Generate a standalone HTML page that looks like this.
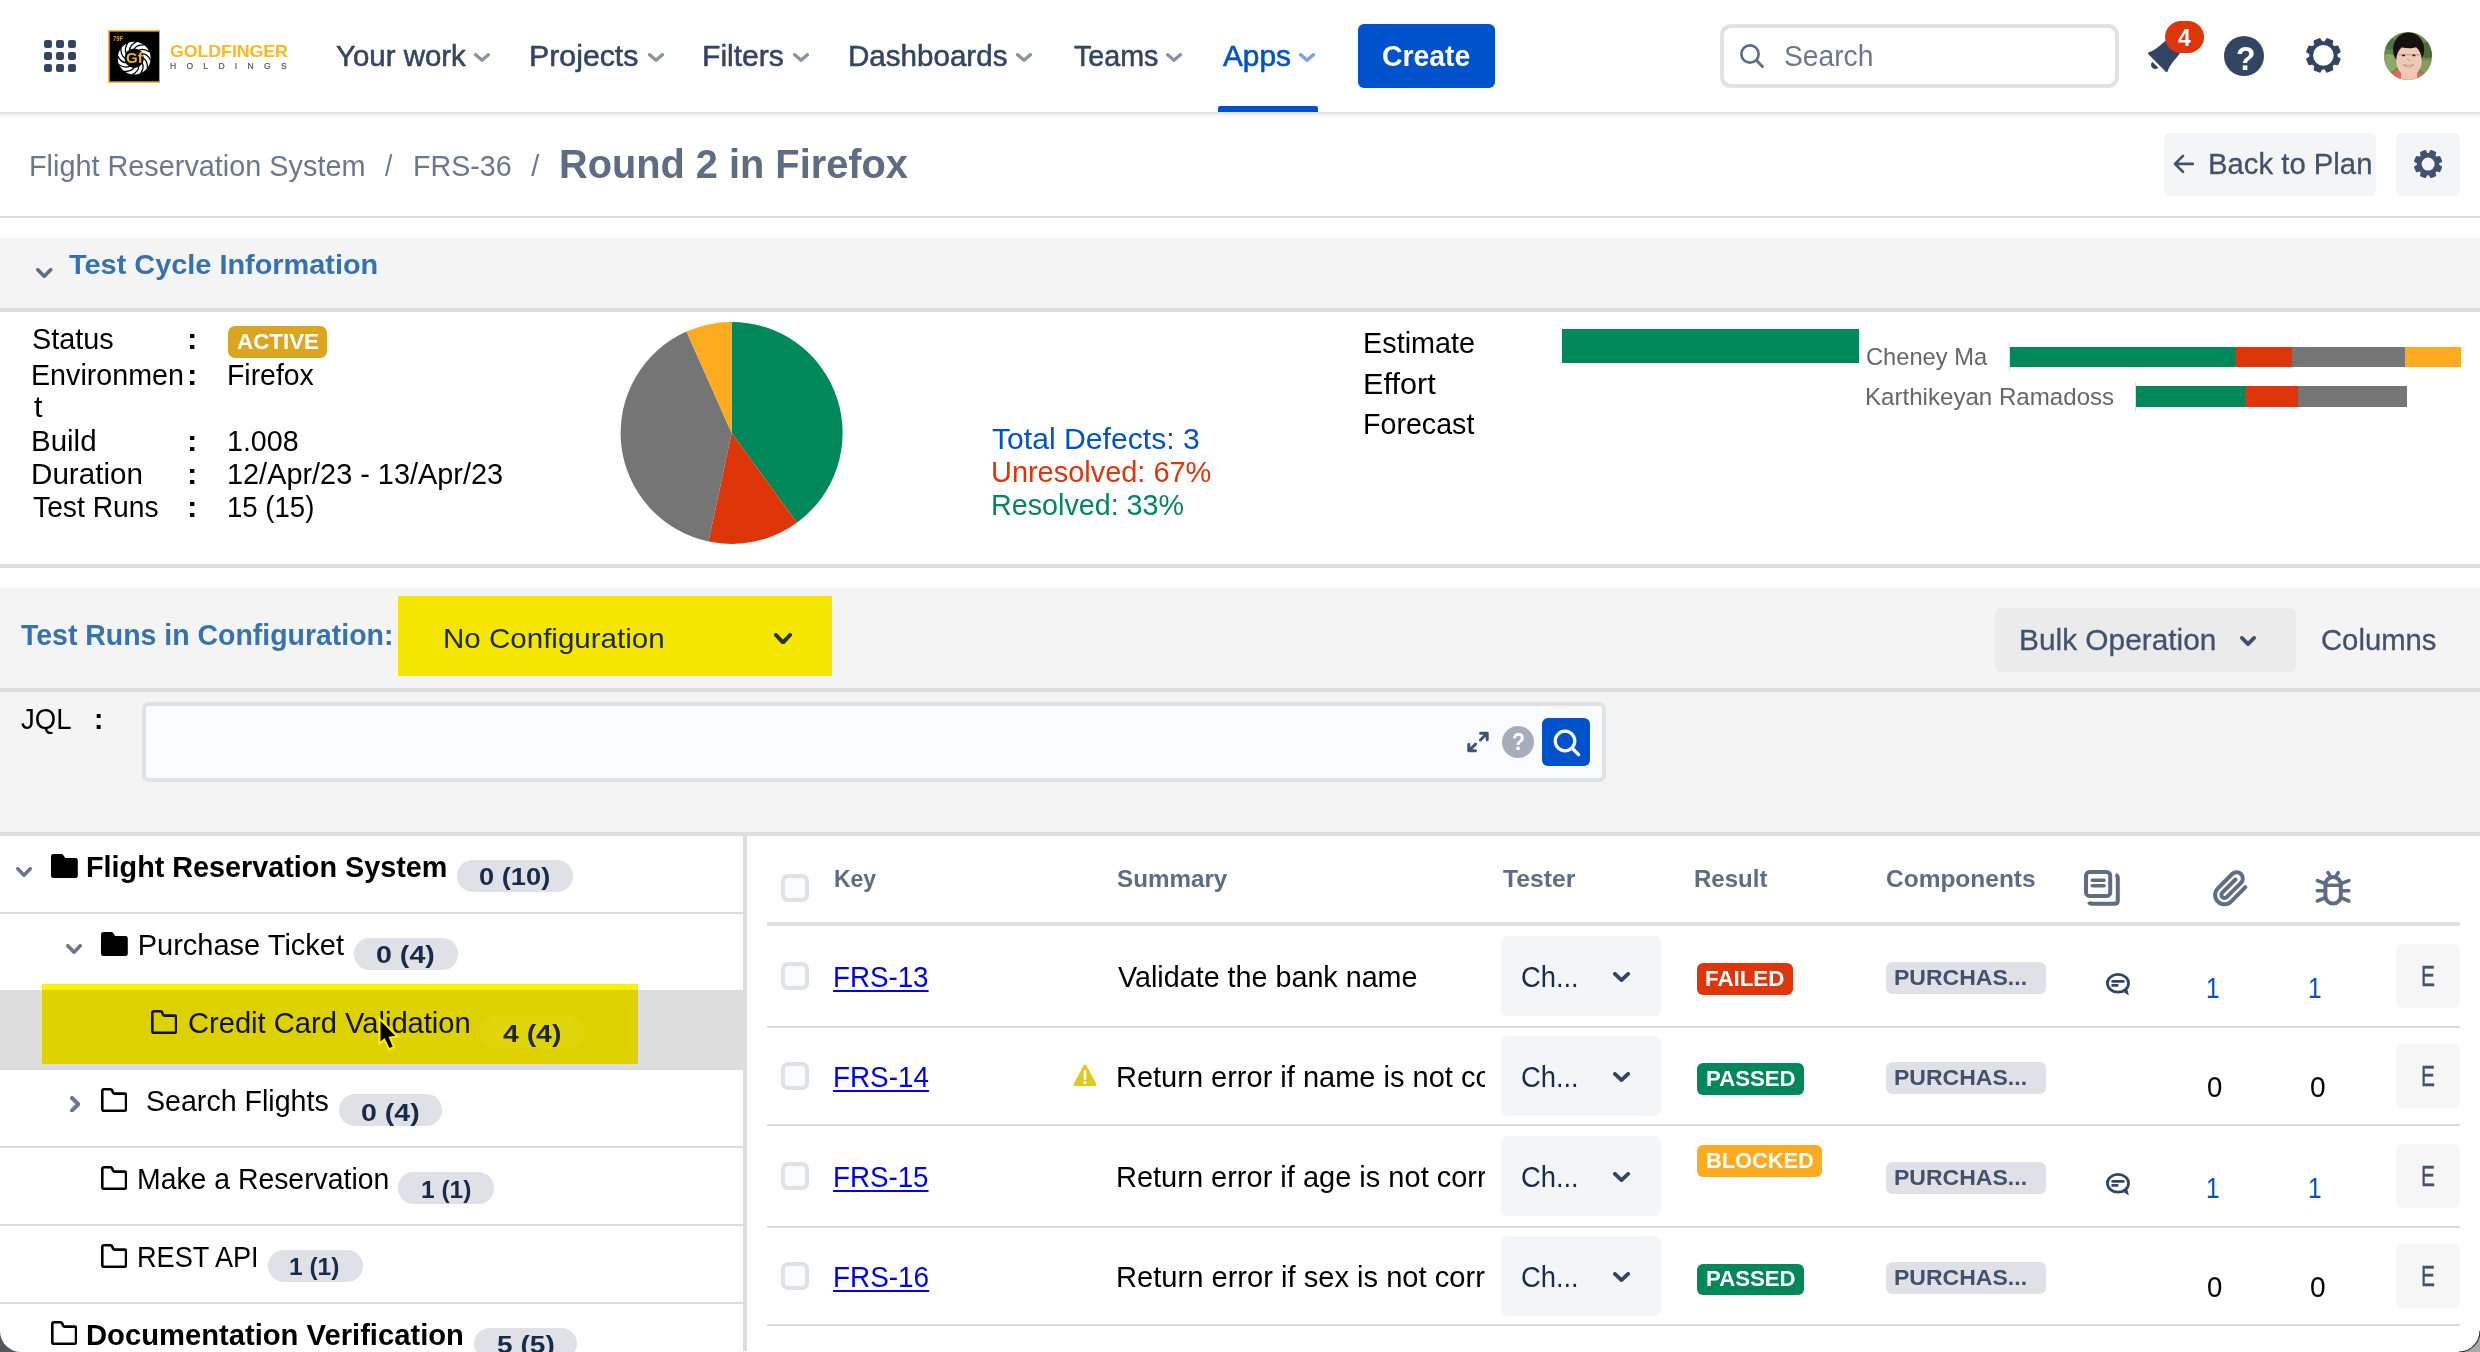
<!DOCTYPE html>
<html lang="en"><head><meta charset="utf-8"><title>Round 2 in Firefox - Test Cycle</title>
<style>
html,body{margin:0;padding:0;background:#fff;}
body{width:2480px;height:1352px;position:relative;overflow:hidden;font-family:"Liberation Sans",sans-serif;}
#root{position:absolute;left:0;top:0;width:2480px;height:1352px;will-change:transform;}
.g{position:absolute;left:0;top:0;margin:0;padding:0;}
.a{position:absolute;display:block;}
.t{position:absolute;display:block;white-space:pre;line-height:1;transform-origin:0 0;}
a.t{text-decoration:none;}
</style></head><body><div id="root">
<section class="g" aria-label="Page chrome">
<div class="a" style="left:0;top:112px;width:2480px;height:7px;background:linear-gradient(to bottom,rgba(9,30,66,.16),rgba(9,30,66,.06) 35%,rgba(9,30,66,0))"></div>
<div class="a" style="left:1218.00px;top:106.00px;width:100.00px;height:6.00px;background:#0052cc;border-radius:2px 2px 0 0;"></div>
<div class="a" style="left:0.00px;top:216.00px;width:2480.00px;height:2.00px;background:#dcdcdc;"></div>
<div class="a" style="left:0.00px;top:238.00px;width:2480.00px;height:70.00px;background:#f4f4f4;"></div>
<div class="a" style="left:0.00px;top:308.00px;width:2480.00px;height:4.00px;background:#dddddd;"></div>
<div class="a" style="left:0.00px;top:564.00px;width:2480.00px;height:4.00px;background:#dddddd;"></div>
<div class="a" style="left:0.00px;top:588.00px;width:2480.00px;height:244.00px;background:#f4f4f4;"></div>
<div class="a" style="left:0.00px;top:688.00px;width:2480.00px;height:4.00px;background:#dddddd;"></div>
<div class="a" style="left:0.00px;top:832.00px;width:2480.00px;height:4.00px;background:#dddddd;"></div>
<div class="a" style="left:743.00px;top:836.00px;width:4.00px;height:514.70px;background:#dddddd;"></div>
</section>
<section class="g" aria-label="Top navigation">
<span class="t" style="left:335.50px;top:42.00px;font-size:29.00px;color:#344563;transform:scaleX(1.0150);-webkit-text-stroke:0.55px #344563;">Your work</span>
<span class="t" style="left:529.43px;top:42.00px;font-size:29.00px;color:#344563;transform:scaleX(1.0447);-webkit-text-stroke:0.55px #344563;">Projects</span>
<span class="t" style="left:702.25px;top:42.00px;font-size:29.00px;color:#344563;transform:scaleX(1.0375);-webkit-text-stroke:0.55px #344563;">Filters</span>
<span class="t" style="left:848.47px;top:42.00px;font-size:29.00px;color:#344563;transform:scaleX(1.0197);-webkit-text-stroke:0.55px #344563;">Dashboards</span>
<span class="t" style="left:1073.50px;top:42.00px;font-size:29.00px;color:#344563;transform:scaleX(0.9882);-webkit-text-stroke:0.55px #344563;">Teams</span>
<span class="t" style="left:1223.08px;top:42.00px;font-size:29.00px;color:#0052cc;transform:scaleX(1.0265);-webkit-text-stroke:0.55px #0052cc;">Apps</span>
<svg class="a" style="left:474.00px;top:52.50px" width="16.00" height="9.00" viewBox="0 0 16.00 9.00"><path d="M1.70 1.70L8.00 7.30L14.30 1.70" fill="none" stroke="#8993a4" stroke-width="3.4" stroke-linecap="round" stroke-linejoin="round"/></svg>
<svg class="a" style="left:647.50px;top:52.50px" width="16.00" height="9.00" viewBox="0 0 16.00 9.00"><path d="M1.70 1.70L8.00 7.30L14.30 1.70" fill="none" stroke="#8993a4" stroke-width="3.4" stroke-linecap="round" stroke-linejoin="round"/></svg>
<svg class="a" style="left:793.00px;top:52.50px" width="16.00" height="9.00" viewBox="0 0 16.00 9.00"><path d="M1.70 1.70L8.00 7.30L14.30 1.70" fill="none" stroke="#8993a4" stroke-width="3.4" stroke-linecap="round" stroke-linejoin="round"/></svg>
<svg class="a" style="left:1016.00px;top:52.50px" width="16.00" height="9.00" viewBox="0 0 16.00 9.00"><path d="M1.70 1.70L8.00 7.30L14.30 1.70" fill="none" stroke="#8993a4" stroke-width="3.4" stroke-linecap="round" stroke-linejoin="round"/></svg>
<svg class="a" style="left:1166.00px;top:52.50px" width="16.00" height="9.00" viewBox="0 0 16.00 9.00"><path d="M1.70 1.70L8.00 7.30L14.30 1.70" fill="none" stroke="#8993a4" stroke-width="3.4" stroke-linecap="round" stroke-linejoin="round"/></svg>
<svg class="a" style="left:1298.50px;top:52.50px" width="16.00" height="9.00" viewBox="0 0 16.00 9.00"><path d="M1.70 1.70L8.00 7.30L14.30 1.70" fill="none" stroke="#7da2e4" stroke-width="3.4" stroke-linecap="round" stroke-linejoin="round"/></svg>
<div class="a" style="left:1358.00px;top:24.00px;width:137.00px;height:63.50px;background:#0052cc;border-radius:6px;"></div>
<span class="t" style="left:1382.46px;top:42.00px;font-size:29.00px;color:#fff;font-weight:700;transform:scaleX(0.9789);">Create</span>
<div class="a" style="left:1720px;top:24px;width:391px;height:56px;border:4px solid #dfe1e6;border-radius:11px;background:#fff"></div>
<span class="t" style="left:1784.45px;top:42.00px;font-size:29.00px;color:#6b778c;transform:scaleX(0.9732);">Search</span>
</section>
<section class="g" aria-label="Breadcrumb">
<span class="t" style="left:29.47px;top:152.00px;font-size:29.00px;color:#6b778c;transform:scaleX(0.9941);">Flight Reservation System</span>
<span class="t" style="left:385.48px;top:152.00px;font-size:29.00px;color:#6b778c;transform:scaleX(0.9078);">/</span>
<span class="t" style="left:413.17px;top:152.00px;font-size:29.00px;color:#6b778c;transform:scaleX(0.9872);">FRS-36</span>
<span class="t" style="left:531.22px;top:152.00px;font-size:29.00px;color:#6b778c;">/</span>
<span class="t" style="left:559.08px;top:144.00px;font-size:40.50px;color:#5e6c84;font-weight:700;transform:scaleX(0.9814);">Round 2 in Firefox</span>
<div class="a" style="left:2164.00px;top:132.50px;width:212.00px;height:63.50px;background:#f4f5f7;border-radius:6px;"></div>
<span class="t" style="left:2208.44px;top:150.00px;font-size:29.00px;color:#42526e;transform:scaleX(1.0099);-webkit-text-stroke:0.3px #42526e;">Back to Plan</span>
<div class="a" style="left:2396.00px;top:132.50px;width:64.00px;height:63.50px;background:#f4f5f7;border-radius:6px;"></div>
</section>
<section class="g" aria-label="Test cycle information">
<svg class="a" style="left:36.00px;top:268.00px" width="16.50" height="10.00" viewBox="0 0 16.50 10.00"><path d="M1.80 1.80L8.25 8.20L14.70 1.80" fill="none" stroke="#5e6c84" stroke-width="3.6" stroke-linecap="round" stroke-linejoin="round"/></svg>
<span class="t" style="left:69.25px;top:251.00px;font-size:27.50px;color:#3572b0;font-weight:700;transform:scaleX(1.0505);">Test Cycle Information</span>
<span class="t" style="left:32.47px;top:325.00px;font-size:29.00px;color:#000;transform:scaleX(0.9944);">Status</span>
<span class="t" style="left:187.26px;top:325.00px;font-size:29.00px;color:#000;font-weight:700;transform:scaleX(1.0730);">:</span>
<span class="t" style="left:31.43px;top:361.00px;font-size:29.00px;color:#000;transform:scaleX(0.9884);">Environmen</span>
<span class="t" style="left:187.26px;top:361.00px;font-size:29.00px;color:#000;font-weight:700;transform:scaleX(1.0730);">:</span>
<span class="t" style="left:31.34px;top:427.00px;font-size:29.00px;color:#000;transform:scaleX(1.0165);">Build</span>
<span class="t" style="left:187.26px;top:427.00px;font-size:29.00px;color:#000;font-weight:700;transform:scaleX(1.0730);">:</span>
<span class="t" style="left:31.41px;top:460.00px;font-size:29.00px;color:#000;transform:scaleX(1.0214);">Duration</span>
<span class="t" style="left:187.26px;top:460.00px;font-size:29.00px;color:#000;font-weight:700;transform:scaleX(1.0730);">:</span>
<span class="t" style="left:32.85px;top:493.00px;font-size:29.00px;color:#000;transform:scaleX(0.9746);">Test Runs</span>
<span class="t" style="left:187.26px;top:493.00px;font-size:29.00px;color:#000;font-weight:700;transform:scaleX(1.0730);">:</span>
<span class="t" style="left:33.53px;top:393.00px;font-size:29.00px;color:#000;transform:scaleX(1.05);">t</span>
<div class="a" style="left:228.00px;top:326.00px;width:98.75px;height:31.75px;background:#daa520;border-radius:7px;"></div>
<span class="t" style="left:236.62px;top:331.00px;font-size:22.00px;color:#fff;font-weight:700;transform:scaleX(1.0162);">ACTIVE</span>
<span class="t" style="left:227.43px;top:361.00px;font-size:29.00px;color:#000;transform:scaleX(0.9791);">Firefox</span>
<span class="t" style="left:227.39px;top:427.00px;font-size:29.00px;color:#000;transform:scaleX(0.9859);">1.008</span>
<span class="t" style="left:227.47px;top:460.00px;font-size:29.00px;color:#000;transform:scaleX(0.9955);">12/Apr/23 - 13/Apr/23</span>
<span class="t" style="left:227.39px;top:493.00px;font-size:29.00px;color:#000;transform:scaleX(0.9505);">15 (15)</span>
<svg class="a" style="left:0;top:0" width="2480" height="600" viewBox="0 0 2480 600"><path d="M731.6 432.9L731.60 321.90A111.0 111.0 0 0 1 796.84 522.70Z" fill="#00875a"/><path d="M731.6 432.9L796.84 522.70A111.0 111.0 0 0 1 708.52 541.47Z" fill="#de350b"/><path d="M731.6 432.9L708.52 541.47A111.0 111.0 0 0 1 686.45 331.50Z" fill="#757575"/><path d="M731.6 432.9L686.45 331.50A111.0 111.0 0 0 1 731.60 321.90Z" fill="#ffab1f"/></svg>
<span class="t" style="left:992.22px;top:425.00px;font-size:29.00px;color:#0052cc;transform:scaleX(1.0393);">Total Defects: 3</span>
<span class="t" style="left:991.01px;top:458.00px;font-size:29.00px;color:#de350b;transform:scaleX(0.9976);">Unresolved: 67%</span>
<span class="t" style="left:990.88px;top:491.00px;font-size:29.00px;color:#00875a;transform:scaleX(0.9897);">Resolved: 33%</span>
<span class="t" style="left:1363.43px;top:329.00px;font-size:29.00px;color:#000;transform:scaleX(0.9936);">Estimate</span>
<span class="t" style="left:1363.41px;top:370.00px;font-size:29.00px;color:#000;transform:scaleX(1.0570);">Effort</span>
<span class="t" style="left:1363.46px;top:410.00px;font-size:29.00px;color:#000;transform:scaleX(0.9872);">Forecast</span>
<div class="a" style="left:1562.00px;top:328.75px;width:296.75px;height:34.25px;background:#00875a;"></div>
<span class="t" style="left:1865.90px;top:345.00px;font-size:24.50px;color:#666;transform:scaleX(0.9664);">Cheney Ma</span>
<span class="t" style="left:1864.91px;top:385.00px;font-size:24.50px;color:#666;transform:scaleX(0.9836);">Karthikeyan Ramadoss</span>
<div class="a" style="left:2009.30px;top:341.00px;width:1.00px;height:31.20px;background:#e0e0e0;"></div>
<div class="a" style="left:2010.00px;top:346.60px;width:226.00px;height:20.80px;background:#00875a;"></div>
<div class="a" style="left:2235.00px;top:346.60px;width:58.00px;height:20.80px;background:#de350b;"></div>
<div class="a" style="left:2292.00px;top:346.60px;width:113.00px;height:20.80px;background:#757575;"></div>
<div class="a" style="left:2404.50px;top:346.60px;width:56.50px;height:20.80px;background:#ffab1f;"></div>
<div class="a" style="left:2135.30px;top:381.60px;width:1.00px;height:30.70px;background:#e0e0e0;"></div>
<div class="a" style="left:2136.00px;top:386.20px;width:109.00px;height:20.80px;background:#00875a;"></div>
<div class="a" style="left:2244.50px;top:386.20px;width:54.50px;height:20.80px;background:#de350b;"></div>
<div class="a" style="left:2298.40px;top:386.20px;width:108.40px;height:20.80px;background:#757575;"></div>
</section>
<section class="g" aria-label="Test runs configuration">
<span class="t" style="left:21.25px;top:621.00px;font-size:29.00px;color:#3572b0;font-weight:700;transform:scaleX(0.9809);">Test Runs in Configuration:</span>
<div class="a" style="left:397.00px;top:595.00px;width:436.00px;height:81.50px;background:#f4f4fa;"></div>
<div class="a" style="left:398.00px;top:596.00px;width:434.00px;height:79.50px;background:#f4e600;"></div>
<span class="t" style="left:442.72px;top:625.00px;font-size:28.00px;color:#1b2a12;transform:scaleX(1.0549);">No Configuration</span>
<svg class="a" style="left:774.00px;top:632.50px" width="18.00" height="11.50" viewBox="0 0 18.00 11.50"><path d="M1.90 1.90L9.00 9.60L16.10 1.90" fill="none" stroke="#2a3413" stroke-width="3.8" stroke-linecap="round" stroke-linejoin="round"/></svg>
<div class="a" style="left:1995.00px;top:608.00px;width:301.00px;height:63.50px;background:#ebebeb;border-radius:7px;"></div>
<span class="t" style="left:2018.86px;top:626.00px;font-size:29.00px;color:#42526e;transform:scaleX(1.0289);-webkit-text-stroke:0.3px #42526e;">Bulk Operation</span>
<svg class="a" style="left:2240.00px;top:636.00px" width="16.00" height="10.00" viewBox="0 0 16.00 10.00"><path d="M1.90 1.90L8.00 8.10L14.10 1.90" fill="none" stroke="#42526e" stroke-width="3.8" stroke-linecap="round" stroke-linejoin="round"/></svg>
<span class="t" style="left:2320.59px;top:626.00px;font-size:29.00px;color:#42526e;transform:scaleX(1.0086);-webkit-text-stroke:0.3px #42526e;">Columns</span>
<span class="t" style="left:20.56px;top:705.00px;font-size:29.00px;color:#000;transform:scaleX(0.9513);">JQL</span>
<span class="t" style="left:93.56px;top:705.00px;font-size:29.00px;color:#000;font-weight:700;transform:scaleX(0.9700);">:</span>
<div class="a" style="left:142px;top:702px;width:1456px;height:72px;border:4px solid #dfe1e6;border-radius:7px;background:#fafbfc"></div>
<div class="a" style="left:1542.00px;top:718.00px;width:48.00px;height:48.00px;background:#0052cc;border-radius:6px;"></div>
<div class="a" style="left:1502px;top:726px;width:32px;height:32px;border-radius:16px;background:#a5adba"></div>
</section>
<section class="g" aria-label="Folder tree">
<div class="a" style="left:0.00px;top:911.50px;width:743.00px;height:2.20px;background:#dddddd;"></div>
<div class="a" style="left:0.00px;top:1146.00px;width:743.00px;height:2.20px;background:#dddddd;"></div>
<div class="a" style="left:0.00px;top:1223.50px;width:743.00px;height:2.20px;background:#dddddd;"></div>
<div class="a" style="left:0.00px;top:1302.00px;width:743.00px;height:2.20px;background:#dddddd;"></div>
<div class="a" style="left:0.00px;top:990.00px;width:743.00px;height:79.50px;background:#dddddd;"></div>
<div class="a" style="left:41.00px;top:990.00px;width:598.00px;height:75.00px;background:#dddcea;"></div>
<div class="a" style="left:42.00px;top:984.00px;width:596.00px;height:6.00px;background:#fff000;"></div>
<div class="a" style="left:42.00px;top:990.00px;width:596.00px;height:74.00px;background:#ddd100;"></div>
<span class="t" style="left:86.47px;top:853.00px;font-size:29.00px;color:#000;font-weight:700;transform:scaleX(0.9920);">Flight Reservation System</span>
<div class="a" style="left:457.00px;top:860.00px;width:116.00px;height:31.75px;background:#dfe1e6;border-radius:15.875px;"></div>
<span class="t" style="left:479.45px;top:866.00px;font-size:23.50px;color:#172b4d;font-weight:700;transform:scaleX(1.1607);">0 (10)</span>
<span class="t" style="left:137.73px;top:931.00px;font-size:29.00px;color:#000;">Purchase Ticket</span>
<div class="a" style="left:353.75px;top:938.00px;width:104.25px;height:31.50px;background:#dfe1e6;border-radius:15.75px;"></div>
<span class="t" style="left:376.43px;top:944.00px;font-size:23.50px;color:#172b4d;font-weight:700;transform:scaleX(1.2175);">0 (4)</span>
<span class="t" style="left:187.99px;top:1009.00px;font-size:29.00px;color:#111100;transform:scaleX(1.0042);">Credit Card Validation</span>
<div class="a" style="left:479.60px;top:1016.00px;width:104.20px;height:32.00px;background:#e0d50d;border-radius:16.0px;"></div>
<span class="t" style="left:503.30px;top:1023.00px;font-size:23.50px;color:#1d2a00;font-weight:700;transform:scaleX(1.2070);">4 (4)</span>
<span class="t" style="left:146.09px;top:1087.00px;font-size:29.00px;color:#000;transform:scaleX(0.9859);">Search Flights</span>
<div class="a" style="left:338.60px;top:1094.10px;width:103.30px;height:31.60px;background:#dfe1e6;border-radius:15.800000000000068px;"></div>
<span class="t" style="left:361.26px;top:1102.00px;font-size:23.50px;color:#172b4d;font-weight:700;transform:scaleX(1.2146);">0 (4)</span>
<span class="t" style="left:136.87px;top:1165.00px;font-size:29.00px;color:#000;transform:scaleX(0.9782);">Make a Reservation</span>
<div class="a" style="left:398.40px;top:1172.20px;width:95.60px;height:31.50px;background:#dfe1e6;border-radius:15.75px;"></div>
<span class="t" style="left:420.66px;top:1179.00px;font-size:23.50px;color:#172b4d;font-weight:700;transform:scaleX(1.0430);">1 (1)</span>
<span class="t" style="left:136.84px;top:1243.00px;font-size:29.00px;color:#000;transform:scaleX(0.9352);">REST API</span>
<div class="a" style="left:268.20px;top:1250.30px;width:95.00px;height:31.60px;background:#dfe1e6;border-radius:15.800000000000068px;"></div>
<span class="t" style="left:289.26px;top:1256.00px;font-size:23.50px;color:#172b4d;font-weight:700;transform:scaleX(1.0430);">1 (1)</span>
<span class="t" style="left:86.44px;top:1321.00px;font-size:29.00px;color:#000;font-weight:700;transform:scaleX(1.0066);">Documentation Verification</span>
<div class="a" style="left:474.40px;top:1327.90px;width:102.40px;height:31.60px;background:#dfe1e6;border-radius:15.799999999999955px;"></div>
<span class="t" style="left:496.77px;top:1334.00px;font-size:23.50px;color:#172b4d;font-weight:700;transform:scaleX(1.1964);">5 (5)</span>
<svg class="a" style="left:16.00px;top:866.50px" width="16.00" height="10.00" viewBox="0 0 16.00 10.00"><path d="M1.80 1.80L8.00 8.20L14.20 1.80" fill="none" stroke="#6b778c" stroke-width="3.6" stroke-linecap="round" stroke-linejoin="round"/></svg>
<svg class="a" style="left:66.00px;top:943.80px" width="16.00" height="10.00" viewBox="0 0 16.00 10.00"><path d="M1.80 1.80L8.00 8.20L14.20 1.80" fill="none" stroke="#6b778c" stroke-width="3.6" stroke-linecap="round" stroke-linejoin="round"/></svg>
<svg class="a" style="left:69.80px;top:1095.90px" width="10.40" height="16.40" viewBox="0 0 10.40 16.40"><path d="M2.00 2.00L8.40 8.20L2.00 14.40" fill="none" stroke="#6b778c" stroke-width="4" stroke-linecap="round" stroke-linejoin="round"/></svg>
</section>
<section class="g" aria-label="Test runs table">
<div class="a" style="left:767.00px;top:922.00px;width:1693.00px;height:4.00px;background:#dfe1e6;"></div>
<div class="a" style="left:767.00px;top:1026.00px;width:1693.00px;height:2.10px;background:#dcdcdc;"></div>
<div class="a" style="left:767.00px;top:1124.00px;width:1693.00px;height:2.10px;background:#dcdcdc;"></div>
<div class="a" style="left:767.00px;top:1226.00px;width:1693.00px;height:2.10px;background:#dcdcdc;"></div>
<div class="a" style="left:767.00px;top:1324.30px;width:1693.00px;height:2.10px;background:#dcdcdc;"></div>
<span class="t" style="left:834.46px;top:867.00px;font-size:24.00px;color:#5e6c84;font-weight:700;transform:scaleX(0.9570);">Key</span>
<span class="t" style="left:1116.74px;top:867.00px;font-size:24.00px;color:#5e6c84;font-weight:700;transform:scaleX(1.0080);">Summary</span>
<span class="t" style="left:1503.10px;top:867.00px;font-size:24.00px;color:#5e6c84;font-weight:700;transform:scaleX(1.0290);">Tester</span>
<span class="t" style="left:1693.77px;top:867.00px;font-size:24.00px;color:#5e6c84;font-weight:700;transform:scaleX(1.0022);">Result</span>
<span class="t" style="left:1885.89px;top:867.00px;font-size:24.00px;color:#5e6c84;font-weight:700;transform:scaleX(1.0203);">Components</span>
<div class="a" style="left:781.25px;top:874.25px;width:19.6px;height:19.6px;border:4px solid #dfe1e6;border-radius:7px;background:#fafbfc"></div>
<div class="a" style="left:781.25px;top:962.2px;width:19.6px;height:19.6px;border:4px solid #dfe1e6;border-radius:7px;background:#fafbfc"></div>
<a class="t" style="left:832.93px;top:963.00px;font-size:29.00px;color:#0000ee;transform:scaleX(0.9562);text-decoration:underline;text-decoration-thickness:2px;text-underline-offset:3px;">FRS-13</a>
<div class="a" style="left:1100px;top:947px;width:385px;height:60px;overflow:hidden"><span class="t" style="left:18.00px;top:16.00px;font-size:29.00px;color:#000;transform:scaleX(0.9898);">Validate the bank name</span></div>
<div class="a" style="left:1501.25px;top:936.00px;width:159.35px;height:79.50px;background:#f4f5f7;border-radius:7px;"></div>
<span class="t" style="left:1521.41px;top:963.00px;font-size:29.00px;color:#172b4d;transform:scaleX(0.9420);">Ch...</span>
<svg class="a" style="left:1612.50px;top:971.75px" width="17.00" height="10.00" viewBox="0 0 17.00 10.00"><path d="M1.90 1.90L8.50 8.10L15.10 1.90" fill="none" stroke="#344563" stroke-width="3.8" stroke-linecap="round" stroke-linejoin="round"/></svg>
<div class="a" style="left:1697.00px;top:963.00px;width:96.00px;height:31.70px;background:#de350b;border-radius:6px;"></div>
<span class="t" style="left:1705.37px;top:968.00px;font-size:22.50px;color:#fff;font-weight:700;transform:scaleX(0.9919);">FAILED</span>
<div class="a" style="left:1885.80px;top:962.30px;width:160.10px;height:31.40px;background:#dfe1e6;border-radius:6px;"></div>
<span class="t" style="left:1893.89px;top:967.00px;font-size:22.50px;color:#42526e;font-weight:700;transform:scaleX(1.0232);">PURCHAS...</span>
<span class="t" style="left:2205.88px;top:974.00px;font-size:29.00px;color:#0052cc;transform:scaleX(0.8445);">1</span>
<span class="t" style="left:2308.49px;top:974.00px;font-size:29.00px;color:#0052cc;transform:scaleX(0.8445);">1</span>
<div class="a" style="left:2396.00px;top:944.00px;width:64.00px;height:63.60px;background:#f6f6f7;border-radius:6px;"></div>
<span class="t" style="left:2420.84px;top:962.00px;font-size:29.00px;color:#42526e;transform:scaleX(0.7226);-webkit-text-stroke:0.3px #42526e;">E</span>
<div class="a" style="left:781.25px;top:1062.2px;width:19.6px;height:19.6px;border:4px solid #dfe1e6;border-radius:7px;background:#fafbfc"></div>
<a class="t" style="left:832.94px;top:1063.00px;font-size:29.00px;color:#0000ee;transform:scaleX(0.9598);text-decoration:underline;text-decoration-thickness:2px;text-underline-offset:3px;">FRS-14</a>
<div class="a" style="left:1100px;top:1047px;width:385px;height:60px;overflow:hidden"><span class="t" style="left:15.99px;top:16.00px;font-size:29.00px;color:#000;">Return error if name is not correct</span></div>
<div class="a" style="left:1501.25px;top:1036.25px;width:159.35px;height:79.50px;background:#f4f5f7;border-radius:7px;"></div>
<span class="t" style="left:1521.41px;top:1063.00px;font-size:29.00px;color:#172b4d;transform:scaleX(0.9420);">Ch...</span>
<svg class="a" style="left:1612.50px;top:1072.00px" width="17.00" height="10.00" viewBox="0 0 17.00 10.00"><path d="M1.90 1.90L8.50 8.10L15.10 1.90" fill="none" stroke="#344563" stroke-width="3.8" stroke-linecap="round" stroke-linejoin="round"/></svg>
<div class="a" style="left:1697.00px;top:1063.00px;width:106.80px;height:32.00px;background:#00875a;border-radius:6px;"></div>
<span class="t" style="left:1706.29px;top:1068.00px;font-size:22.50px;color:#fff;font-weight:700;transform:scaleX(0.9851);">PASSED</span>
<div class="a" style="left:1885.80px;top:1061.90px;width:160.10px;height:32.10px;background:#dfe1e6;border-radius:6px;"></div>
<span class="t" style="left:1893.89px;top:1067.00px;font-size:22.50px;color:#42526e;font-weight:700;transform:scaleX(1.0232);">PURCHAS...</span>
<span class="t" style="left:2206.84px;top:1072.00px;font-size:29.50px;color:#000;transform:scaleX(0.9324);">0</span>
<span class="t" style="left:2310.18px;top:1072.00px;font-size:29.50px;color:#000;transform:scaleX(0.9530);">0</span>
<div class="a" style="left:2396.00px;top:1043.70px;width:64.00px;height:64.50px;background:#f6f6f7;border-radius:6px;"></div>
<span class="t" style="left:2420.84px;top:1062.00px;font-size:29.00px;color:#42526e;transform:scaleX(0.7226);-webkit-text-stroke:0.3px #42526e;">E</span>
<div class="a" style="left:781.25px;top:1162.2px;width:19.6px;height:19.6px;border:4px solid #dfe1e6;border-radius:7px;background:#fafbfc"></div>
<a class="t" style="left:832.94px;top:1163.00px;font-size:29.00px;color:#0000ee;transform:scaleX(0.9558);text-decoration:underline;text-decoration-thickness:2px;text-underline-offset:3px;">FRS-15</a>
<div class="a" style="left:1100px;top:1147px;width:385px;height:60px;overflow:hidden"><span class="t" style="left:15.99px;top:16.00px;font-size:29.00px;color:#000;">Return error if age is not correct</span></div>
<div class="a" style="left:1501.25px;top:1136.25px;width:159.35px;height:79.50px;background:#f4f5f7;border-radius:7px;"></div>
<span class="t" style="left:1521.41px;top:1163.00px;font-size:29.00px;color:#172b4d;transform:scaleX(0.9420);">Ch...</span>
<svg class="a" style="left:1612.50px;top:1172.00px" width="17.00" height="10.00" viewBox="0 0 17.00 10.00"><path d="M1.90 1.90L8.50 8.10L15.10 1.90" fill="none" stroke="#344563" stroke-width="3.8" stroke-linecap="round" stroke-linejoin="round"/></svg>
<div class="a" style="left:1697.00px;top:1145.30px;width:125.00px;height:31.50px;background:#ffab1f;border-radius:6px;"></div>
<span class="t" style="left:1706.28px;top:1150.00px;font-size:22.50px;color:#fff;font-weight:700;transform:scaleX(0.9684);">BLOCKED</span>
<div class="a" style="left:1885.80px;top:1161.90px;width:160.10px;height:32.10px;background:#dfe1e6;border-radius:6px;"></div>
<span class="t" style="left:1893.89px;top:1167.00px;font-size:22.50px;color:#42526e;font-weight:700;transform:scaleX(1.0232);">PURCHAS...</span>
<span class="t" style="left:2205.88px;top:1174.00px;font-size:29.00px;color:#0052cc;transform:scaleX(0.8445);">1</span>
<span class="t" style="left:2308.49px;top:1174.00px;font-size:29.00px;color:#0052cc;transform:scaleX(0.8445);">1</span>
<div class="a" style="left:2396.00px;top:1143.70px;width:64.00px;height:64.10px;background:#f6f6f7;border-radius:6px;"></div>
<span class="t" style="left:2420.84px;top:1162.00px;font-size:29.00px;color:#42526e;transform:scaleX(0.7226);-webkit-text-stroke:0.3px #42526e;">E</span>
<div class="a" style="left:781.25px;top:1262.2px;width:19.6px;height:19.6px;border:4px solid #dfe1e6;border-radius:7px;background:#fafbfc"></div>
<a class="t" style="left:832.93px;top:1263.00px;font-size:29.00px;color:#0000ee;transform:scaleX(0.9619);text-decoration:underline;text-decoration-thickness:2px;text-underline-offset:3px;">FRS-16</a>
<div class="a" style="left:1100px;top:1247px;width:385px;height:60px;overflow:hidden"><span class="t" style="left:15.99px;top:16.00px;font-size:29.00px;color:#000;transform:scaleX(1.0038);">Return error if sex is not correct</span></div>
<div class="a" style="left:1501.25px;top:1236.25px;width:159.35px;height:79.50px;background:#f4f5f7;border-radius:7px;"></div>
<span class="t" style="left:1521.41px;top:1263.00px;font-size:29.00px;color:#172b4d;transform:scaleX(0.9420);">Ch...</span>
<svg class="a" style="left:1612.50px;top:1272.00px" width="17.00" height="10.00" viewBox="0 0 17.00 10.00"><path d="M1.90 1.90L8.50 8.10L15.10 1.90" fill="none" stroke="#344563" stroke-width="3.8" stroke-linecap="round" stroke-linejoin="round"/></svg>
<div class="a" style="left:1697.00px;top:1263.50px;width:106.80px;height:31.50px;background:#00875a;border-radius:6px;"></div>
<span class="t" style="left:1706.29px;top:1268.00px;font-size:22.50px;color:#fff;font-weight:700;transform:scaleX(0.9851);">PASSED</span>
<div class="a" style="left:1885.80px;top:1262.00px;width:160.10px;height:31.70px;background:#dfe1e6;border-radius:6px;"></div>
<span class="t" style="left:1893.89px;top:1267.00px;font-size:22.50px;color:#42526e;font-weight:700;transform:scaleX(1.0232);">PURCHAS...</span>
<span class="t" style="left:2206.84px;top:1272.00px;font-size:29.50px;color:#000;transform:scaleX(0.9324);">0</span>
<span class="t" style="left:2310.18px;top:1272.00px;font-size:29.50px;color:#000;transform:scaleX(0.9530);">0</span>
<div class="a" style="left:2396.00px;top:1244.00px;width:64.00px;height:63.90px;background:#f6f6f7;border-radius:6px;"></div>
<span class="t" style="left:2420.84px;top:1262.00px;font-size:29.00px;color:#42526e;transform:scaleX(0.7226);-webkit-text-stroke:0.3px #42526e;">E</span>
</section>
<section class="g" aria-label="Icons">
<svg class="a" style="left:44px;top:40px;" width="32" height="32" viewBox="0 0 32 32"><rect x="0" y="0" width="8" height="8" rx="2.2" fill="#344563"/><rect x="12" y="0" width="8" height="8" rx="2.2" fill="#344563"/><rect x="24" y="0" width="8" height="8" rx="2.2" fill="#344563"/><rect x="0" y="12" width="8" height="8" rx="2.2" fill="#344563"/><rect x="12" y="12" width="8" height="8" rx="2.2" fill="#344563"/><rect x="24" y="12" width="8" height="8" rx="2.2" fill="#344563"/><rect x="0" y="24" width="8" height="8" rx="2.2" fill="#344563"/><rect x="12" y="24" width="8" height="8" rx="2.2" fill="#344563"/><rect x="24" y="24" width="8" height="8" rx="2.2" fill="#344563"/></svg>
<svg class="a" style="left:107.7px;top:29.5px;" width="52.8" height="53" viewBox="0 0 52.8 53"><rect x="0.9" y="0.9" width="51" height="51.2" fill="#000" stroke="#f5b41a" stroke-width="1.5"/><circle cx="26.2" cy="28.2" r="16.4" fill="#fff"/><path d="M35.40 28.20Q39.92 30.98 39.44 38.54" stroke="#000" stroke-width="1.3" fill="none"/><path d="M34.17 32.80Q36.69 37.47 32.49 43.78" stroke="#000" stroke-width="1.3" fill="none"/><path d="M30.80 36.17Q30.65 41.47 23.86 44.84" stroke="#000" stroke-width="1.3" fill="none"/><path d="M26.20 37.40Q23.42 41.92 15.86 41.44" stroke="#000" stroke-width="1.3" fill="none"/><path d="M21.60 36.17Q16.93 38.69 10.62 34.49" stroke="#000" stroke-width="1.3" fill="none"/><path d="M18.23 32.80Q12.93 32.65 9.56 25.86" stroke="#000" stroke-width="1.3" fill="none"/><path d="M17.00 28.20Q12.48 25.42 12.96 17.86" stroke="#000" stroke-width="1.3" fill="none"/><path d="M18.23 23.60Q15.71 18.93 19.91 12.62" stroke="#000" stroke-width="1.3" fill="none"/><path d="M21.60 20.23Q21.75 14.93 28.54 11.56" stroke="#000" stroke-width="1.3" fill="none"/><path d="M26.20 19.00Q28.98 14.48 36.54 14.96" stroke="#000" stroke-width="1.3" fill="none"/><path d="M30.80 20.23Q35.47 17.71 41.78 21.91" stroke="#000" stroke-width="1.3" fill="none"/><path d="M34.17 23.60Q39.47 23.75 42.84 30.54" stroke="#000" stroke-width="1.3" fill="none"/><circle cx="26.2" cy="28.2" r="9.7" fill="#000"/></svg>
<span class="t" style="left:125.50px;top:51.00px;font-size:14.50px;color:#f5b41a;font-weight:700;transform:scaleX(1.0376);">Gf</span>
<span class="t" style="left:113.31px;top:36.00px;font-size:6.50px;color:#d9a016;font-weight:700;transform:scaleX(0.9002);">79F</span>
<span class="t" style="left:169.51px;top:43.00px;font-size:16.50px;color:#fdb81e;font-weight:700;transform:scaleX(1.0716);">GOLDFINGER</span>
<span class="t" style="left:170.00px;top:62.00px;font-size:8.50px;color:#555;letter-spacing:10.311px;-webkit-text-stroke:0.2px #555;">HOLDINGS</span>
<svg class="a" style="left:1738px;top:42px;" width="28" height="28" viewBox="0 0 28 28"><circle cx="12" cy="12" r="8.65" fill="none" stroke="#5e6c84" stroke-width="2.7"/><path d="M18.3 18.3L24.4 24.6" stroke="#5e6c84" stroke-width="2.9" stroke-linecap="round"/></svg>
<svg class="a" style="left:2120px;top:10px;" width="80" height="80" viewBox="0 0 80 80"><g transform="translate(37.7,52.3) rotate(45)"><path d="M-12.3 -0.3L12.3 -0.3C9.9 -4.5 8.9 -12 8.6 -20C8 -28 -8 -28 -8.6 -20C-8.9 -12 -9.9 -4.5 -12.3 -0.3Z" fill="#344563" stroke="#344563" stroke-width="2.4" stroke-linejoin="round"/><path d="M-4.3 3.4A4.3 4.3 0 0 0 4.3 3.4Z" fill="#344563"/></g></svg>
<div class="a" style="left:2165.00px;top:20.70px;width:39.30px;height:32.10px;background:#de350b;border-radius:16px;"></div>
<span class="t" style="left:2178.30px;top:26.00px;font-size:24.50px;color:#fff;font-weight:700;transform:scaleX(0.9321);">4</span>
<div class="a" style="left:2224px;top:36px;width:40px;height:40px;border-radius:20px;background:#344563"></div>
<span class="t" style="left:2235.77px;top:42.00px;font-size:33.00px;color:#fff;font-weight:700;transform:scaleX(0.9662);">?</span>
<svg class="a" style="left:2300px;top:30px;" width="50" height="50" viewBox="0 0 50 50"><path d="M25.16 12.32L27.15 9.23L32.18 11.31L31.41 14.91L33.89 17.39L37.49 16.62L39.57 21.65L36.48 23.64L36.48 27.16L39.57 29.15L37.49 34.18L33.89 33.41L31.41 35.89L32.18 39.49L27.15 41.57L25.16 38.48L21.64 38.48L19.65 41.57L14.62 39.49L15.39 35.89L12.91 33.41L9.31 34.18L7.23 29.15L10.32 27.16L10.32 23.64L7.23 21.65L9.31 16.62L12.91 17.39L15.39 14.91L14.62 11.31L19.65 9.23L21.64 12.32ZM12.00 25.40A11.4 11.4 0 1 0 34.80 25.40A11.4 11.4 0 1 0 12.00 25.40Z" fill="#344563" fill-rule="evenodd" stroke="#344563" stroke-width="2.2" stroke-linejoin="round"/></svg>
<svg class="a" style="left:2408px;top:144px;" width="40" height="40" viewBox="0 0 40 40"><path d="M21.46 9.99L23.10 7.14L27.14 8.81L26.29 11.99L28.21 13.91L31.39 13.06L33.06 17.10L30.21 18.74L30.21 21.46L33.06 23.10L31.39 27.14L28.21 26.29L26.29 28.21L27.14 31.39L23.10 33.06L21.46 30.21L18.74 30.21L17.10 33.06L13.06 31.39L13.91 28.21L11.99 26.29L8.81 27.14L7.14 23.10L9.99 21.46L9.99 18.74L7.14 17.10L8.81 13.06L11.99 13.91L13.91 11.99L13.06 8.81L17.10 7.14L18.74 9.99ZM12.50 20.10A7.6 7.6 0 1 0 27.70 20.10A7.6 7.6 0 1 0 12.50 20.10Z" fill="#42526e" fill-rule="evenodd" stroke="#42526e" stroke-width="2.2" stroke-linejoin="round"/></svg>
<svg class="a" style="left:2384px;top:32px;border-radius:24px;overflow:hidden;" width="48" height="48" viewBox="0 0 48 48"><g><rect width="48" height="48" fill="#6c8a4a"/><circle cx="5" cy="31" r="9" fill="#8fa866"/><circle cx="44" cy="18" r="8" fill="#4d6a38"/><circle cx="43" cy="35" r="7" fill="#86a05c"/><circle cx="6" cy="12" r="6" fill="#557340"/><path d="M4 48C7 41 12 38.5 17 37.5L21 48ZM31 48L33 40C37 41 41 43 43 48Z" fill="#f0605f"/><ellipse cx="24.6" cy="17.5" rx="15.6" ry="17" fill="#17110f"/><path d="M17 40H33V48H17Z" fill="#eec4ae"/><ellipse cx="25" cy="28.5" rx="12.8" ry="16" fill="#f0c9b4"/><path d="M11.5 24C11 12 17 8 24.6 8C32 8 38.5 12 37.7 24C37 19.5 35.8 16.5 33.8 14.6C28.5 17.2 20 16.6 15.6 14.6C13.6 17 12.3 20 11.5 24Z" fill="#17110f"/><path d="M19.3 32.8Q24.6 37.6 29.9 32.8Q24.6 34.6 19.3 32.8Z" fill="#fff" stroke="#b96f5f" stroke-width="0.7"/><path d="M13.5 22.8H36" stroke="#9a8a80" stroke-width="0.7"/><ellipse cx="19.6" cy="23.4" rx="1.6" ry="0.9" fill="#2a1d18"/><ellipse cx="29.9" cy="23.4" rx="1.6" ry="0.9" fill="#2a1d18"/><path d="M23.5 26.5Q24.6 29.5 26 28.8" stroke="#c89a80" stroke-width="0.8" fill="none"/></g></svg>
<svg class="a" style="left:2170px;top:150px;" width="30" height="28" viewBox="0 0 30 28"><path d="M22.8 13.9H5.4M13 5.9L5 13.9L13 21.9" fill="none" stroke="#42526e" stroke-width="2.7" stroke-linecap="round" stroke-linejoin="round"/></svg>
<svg class="a" style="left:1462px;top:726px;" width="32" height="32" viewBox="0 0 32 32"><path d="M18.6 7.2H25.2V13.8M24.6 7.8L18.4 14M13.4 24.8H6.8V18.2M7.4 24.2L13.6 18" fill="none" stroke="#42526e" stroke-width="3" stroke-linecap="round" stroke-linejoin="round"/></svg>
<span class="t" style="left:1511.83px;top:731.00px;font-size:23.50px;color:#fff;font-weight:700;transform:scaleX(0.9086);">?</span>
<svg class="a" style="left:1542px;top:718px;" width="48" height="48" viewBox="0 0 48 48"><circle cx="23" cy="23" r="9.8" fill="none" stroke="#fff" stroke-width="3.2"/><path d="M30.2 30.2L36.6 36.6" stroke="#fff" stroke-width="3.4" stroke-linecap="round"/></svg>
<svg class="a" style="left:50.75px;top:853.9px;" width="27" height="24.2" viewBox="0 0 27 24.2"><path d="M2.5 0H10Q11.5 0 12.4 1.2L14.2 3.9H24.5Q26.8 3.9 26.8 6.2V21.7Q26.8 24 24.5 24H2.3Q0 24 0 21.7V2.3Q0 0 2.5 0Z" fill="#000"/></svg>
<svg class="a" style="left:100.75px;top:931.9px;" width="27" height="24.2" viewBox="0 0 27 24.2"><path d="M2.5 0H10Q11.5 0 12.4 1.2L14.2 3.9H24.5Q26.8 3.9 26.8 6.2V21.7Q26.8 24 24.5 24H2.3Q0 24 0 21.7V2.3Q0 0 2.5 0Z" fill="#000"/></svg>
<svg class="a" style="left:150.8px;top:1009.9000000000001px;" width="26.4" height="24" viewBox="0 0 26.4 24"><path d="M2.9 1.3H9.4Q10.6 1.3 11.1 2.4L12 4.5Q12.5 5.6 13.7 5.6H23.3Q25.1 5.6 25.1 7.4V20.9Q25.1 22.7 23.3 22.7H3.1Q1.3 22.7 1.3 20.9V3.1Q1.3 1.3 3.1 1.3Z" fill="none" stroke="#111100" stroke-width="2.6" stroke-linejoin="round"/></svg>
<svg class="a" style="left:100.7px;top:1088px;" width="26.4" height="24" viewBox="0 0 26.4 24"><path d="M2.9 1.3H9.4Q10.6 1.3 11.1 2.4L12 4.5Q12.5 5.6 13.7 5.6H23.3Q25.1 5.6 25.1 7.4V20.9Q25.1 22.7 23.3 22.7H3.1Q1.3 22.7 1.3 20.9V3.1Q1.3 1.3 3.1 1.3Z" fill="none" stroke="#000" stroke-width="2.6" stroke-linejoin="round"/></svg>
<svg class="a" style="left:100.7px;top:1166px;" width="26.4" height="24" viewBox="0 0 26.4 24"><path d="M2.9 1.3H9.4Q10.6 1.3 11.1 2.4L12 4.5Q12.5 5.6 13.7 5.6H23.3Q25.1 5.6 25.1 7.4V20.9Q25.1 22.7 23.3 22.7H3.1Q1.3 22.7 1.3 20.9V3.1Q1.3 1.3 3.1 1.3Z" fill="none" stroke="#000" stroke-width="2.6" stroke-linejoin="round"/></svg>
<svg class="a" style="left:100.7px;top:1243.6px;" width="26.4" height="24" viewBox="0 0 26.4 24"><path d="M2.9 1.3H9.4Q10.6 1.3 11.1 2.4L12 4.5Q12.5 5.6 13.7 5.6H23.3Q25.1 5.6 25.1 7.4V20.9Q25.1 22.7 23.3 22.7H3.1Q1.3 22.7 1.3 20.9V3.1Q1.3 1.3 3.1 1.3Z" fill="none" stroke="#000" stroke-width="2.6" stroke-linejoin="round"/></svg>
<svg class="a" style="left:50.8px;top:1321.4px;" width="26.4" height="24" viewBox="0 0 26.4 24"><path d="M2.9 1.3H9.4Q10.6 1.3 11.1 2.4L12 4.5Q12.5 5.6 13.7 5.6H23.3Q25.1 5.6 25.1 7.4V20.9Q25.1 22.7 23.3 22.7H3.1Q1.3 22.7 1.3 20.9V3.1Q1.3 1.3 3.1 1.3Z" fill="none" stroke="#000" stroke-width="2.6" stroke-linejoin="round"/></svg>
<svg class="a" style="left:370px;top:1010px;" width="36" height="46" viewBox="0 0 36 46"><path d="M9.5 8.4L9.5 33.8L14.3 29.6L18.9 39.2L24 37.2L19.9 27.6L27.3 26.6Z" fill="#000" stroke="#fff200" stroke-width="2" stroke-linejoin="miter"/></svg>
<svg class="a" style="left:2082px;top:868px;" width="40" height="40" viewBox="0 0 40 40"><rect x="4" y="4.1" width="24.2" height="23.8" rx="3.5" fill="none" stroke="#5e6c84" stroke-width="4"/><path d="M10.3 12.2H22M10.3 17.8H22" stroke="#5e6c84" stroke-width="3.6" stroke-linecap="round"/><path d="M33.5 7Q35.8 7.6 35.8 10V32.5Q35.8 35.8 32.5 35.8H10Q7.8 35.8 7 33.8" fill="none" stroke="#5e6c84" stroke-width="4" stroke-linecap="butt"/></svg>
<svg class="a" style="left:2211.9px;top:870.2px;" width="37.4" height="37.4" viewBox="0 0 24 24"><path d="M21.44 11.05l-9.19 9.19a6 6 0 0 1-8.49-8.49l9.19-9.19a4 4 0 0 1 5.66 5.66l-9.2 9.19a2 2 0 0 1-2.83-2.83l8.49-8.48" fill="none" stroke="#5e6c84" stroke-width="2.55" stroke-linecap="round" stroke-linejoin="round"/></svg>
<svg class="a" style="left:2315px;top:870px;" width="37" height="37" viewBox="0 0 37 37"><rect x="10.4" y="7" width="15.4" height="26.6" rx="7.7" fill="none" stroke="#5e6c84" stroke-width="4"/><path d="M10.4 15.3H25.8" stroke="#5e6c84" stroke-width="3.4"/><path d="M2.4 10.6L9 13.1M2.4 20.7H9M2.4 31L9 28.2M33.8 10.6L27.2 13.1M33.8 20.7H27.2M33.8 31L27.2 28.2M13 2.6L14.8 5.4M23.2 2.6L21.4 5.4" stroke="#5e6c84" stroke-width="3.6" stroke-linecap="round"/></svg>
<svg class="a" style="left:2105px;top:971px;" width="28" height="26" viewBox="0 0 28 26"><ellipse cx="13" cy="12.3" rx="10.6" ry="8.9" fill="none" stroke="#344563" stroke-width="2.8"/><path d="M7.6 10.3H18.4M7.6 14.4H12.2" stroke="#344563" stroke-width="2.8" stroke-linecap="round"/><path d="M17.3 19.8L23.3 23.6L21.4 17.2Z" fill="#344563" stroke="#344563" stroke-width="1" stroke-linejoin="round"/></svg>
<svg class="a" style="left:2105px;top:1171px;" width="28" height="26" viewBox="0 0 28 26"><ellipse cx="13" cy="12.3" rx="10.6" ry="8.9" fill="none" stroke="#344563" stroke-width="2.8"/><path d="M7.6 10.3H18.4M7.6 14.4H12.2" stroke="#344563" stroke-width="2.8" stroke-linecap="round"/><path d="M17.3 19.8L23.3 23.6L21.4 17.2Z" fill="#344563" stroke="#344563" stroke-width="1" stroke-linejoin="round"/></svg>
<svg class="a" style="left:1072px;top:1062px;" width="26" height="26" viewBox="0 0 26 26"><path d="M13 4L23 22.6H3Z" fill="#e0c91f" stroke="#e0c91f" stroke-width="3" stroke-linejoin="round"/><path d="M13 9.5V16.8" stroke="#fff" stroke-width="2.6" stroke-linecap="round"/><circle cx="13" cy="20.6" r="1.5" fill="#fff"/></svg>
<svg class="a" style="left:0px;top:1331px;" width="21" height="21" viewBox="0 0 21 21"><path d="M0 0V21H21A21 21 0 0 1 0 0Z" fill="#55565c"/></svg>
<svg class="a" style="left:2459px;top:1331px;" width="21" height="21" viewBox="0 0 21 21"><path d="M21 0V21H0A21 21 0 0 0 21 0Z" fill="#a9a9ab"/><path d="M0 21A21 21 0 0 0 21 0" fill="none" stroke="#333" stroke-width="1.2"/></svg>
</section>
</div></body></html>
